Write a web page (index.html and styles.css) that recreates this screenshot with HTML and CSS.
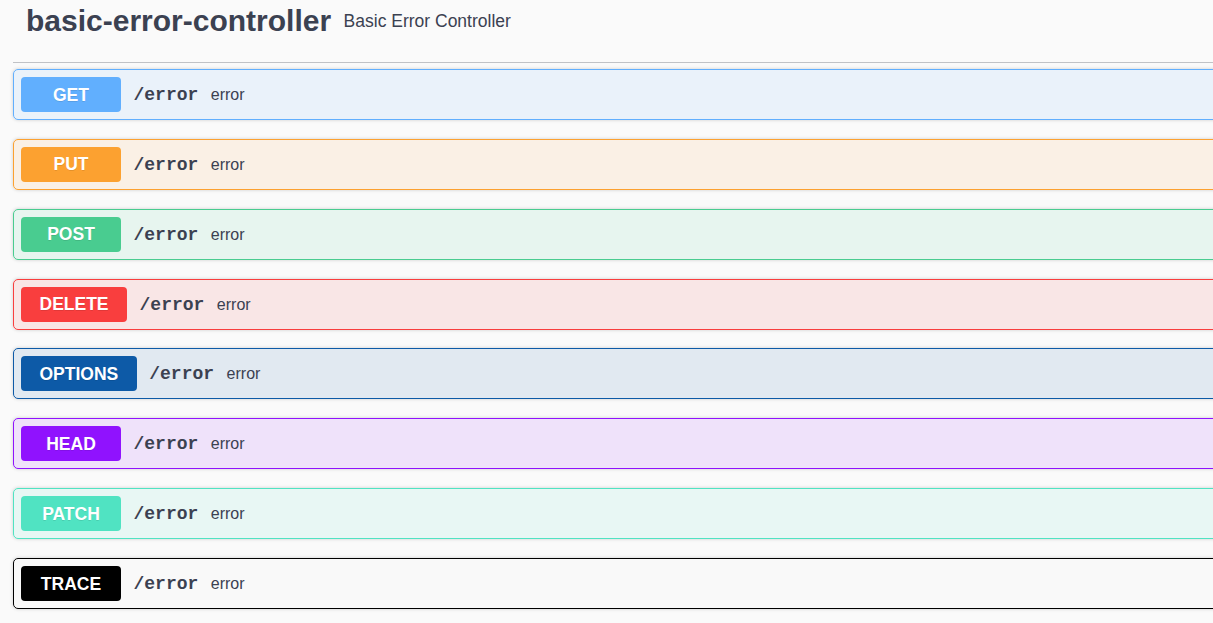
FILE: index.html
```html
<!DOCTYPE html>
<html>
<head>
<meta charset="utf-8">
<title>basic-error-controller</title>
<link rel="stylesheet" href="styles.css">
</head>
<body>
<div class="wrap">
  <h3 class="tag">
    <span class="tag-name">basic-error-controller</span>
    <small class="tag-desc">Basic Error Controller</small>
  </h3>
  <div class="ops">
    <div class="op op-get"><span class="method">GET</span><span class="path">/error</span><span class="desc">error</span></div>
    <div class="op op-put"><span class="method">PUT</span><span class="path">/error</span><span class="desc">error</span></div>
    <div class="op op-post"><span class="method">POST</span><span class="path">/error</span><span class="desc">error</span></div>
    <div class="op op-delete"><span class="method">DELETE</span><span class="path">/error</span><span class="desc">error</span></div>
    <div class="op op-options"><span class="method">OPTIONS</span><span class="path">/error</span><span class="desc">error</span></div>
    <div class="op op-head"><span class="method">HEAD</span><span class="path">/error</span><span class="desc">error</span></div>
    <div class="op op-patch"><span class="method">PATCH</span><span class="path">/error</span><span class="desc">error</span></div>
    <div class="op op-trace"><span class="method">TRACE</span><span class="path">/error</span><span class="desc">error</span></div>
  </div>
</div>
</body>
</html>
```
FILE: styles.css
```css
html, body {
  margin: 0;
  padding: 0;
  background: #fafafa;
  overflow: hidden;
}
body {
  font-family: "Liberation Sans", Arial, sans-serif;
  color: #3b4151;
}
.wrap {
  width: 1260px;
  padding-left: 13px;
}
.tag {
  display: flex;
  align-items: center;
  margin: 0 0 6px 0;
  padding: 3px 0 23px 13px;
  border-bottom: 1px solid rgba(59, 65, 81, 0.3);
  font-weight: 700;
}
.tag-name {
  font-size: 30px;
  line-height: 36px;
  font-weight: 700;
  color: #3b4151;
}
.tag-desc {
  font-size: 17.5px;
  line-height: 20px;
  font-weight: 400;
  padding: 0 12.5px;
  color: #3b4151;
}
.op {
  display: flex;
  align-items: center;
  padding: 7px 7px;
  margin-bottom: 18.86px;
  border: 1px solid #000;
  border-radius: 5px;
  box-shadow: 0 0 3.75px rgba(0, 0, 0, 0.19);
  background: rgba(0, 0, 0, 0.005);
}
.method {
  box-sizing: border-box;
  min-width: 100px;
  height: 35px;
  padding: 1px 18.5px 0;
  display: flex;
  align-items: center;
  justify-content: center;
  border-radius: 4px;
  background: #000;
  color: #fff;
  font-size: 17.5px;
  font-weight: 700;
  text-shadow: 0 1px 0 rgba(0, 0, 0, 0.1);
}
.path {
  padding: 1px 12.5px 0;
  font-family: "Liberation Mono", "DejaVu Sans Mono", monospace;
  font-size: 18px;
  font-weight: 700;
  color: #3b4151;
}
.desc {
  padding-top: 1px;
  font-size: 16px;
  color: #3b4151;
}
.op-get { border-color: #61affe; background: rgba(97, 175, 254, 0.1); }
.op-get .method { background: #61affe; }
.op-put { border-color: #fca130; background: rgba(252, 161, 48, 0.1); }
.op-put .method { background: #fca130; }
.op-post { border-color: #49cc90; background: rgba(73, 204, 144, 0.1); }
.op-post .method { background: #49cc90; }
.op-delete { border-color: #f93e3e; background: rgba(249, 62, 62, 0.1); }
.op-delete .method { background: #f93e3e; }
.op-options { border-color: #0d5aa7; background: rgba(13, 90, 167, 0.1); }
.op-options .method { background: #0d5aa7; }
.op-head { border-color: #9012fe; background: rgba(144, 18, 254, 0.1); }
.op-head .method { background: #9012fe; }
.op-patch { border-color: #50e3c2; background: rgba(80, 227, 194, 0.1); }
.op-patch .method { background: #50e3c2; }
.op-trace { border-color: #000; }
.op-trace .method { background: #000; }
```
